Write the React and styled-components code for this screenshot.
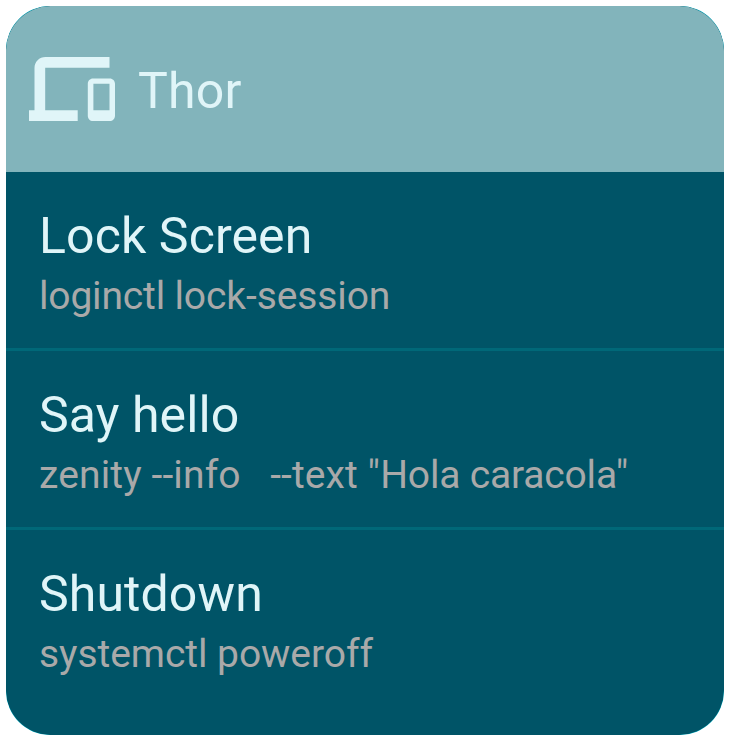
import React from "react";
import styled, { createGlobalStyle } from "styled-components";

const Global = createGlobalStyle`
  body { margin: 0; background: #fff; font-family: Roboto, sans-serif; }
`;

const Page = styled.main`
  box-sizing: border-box;
  height: 742px;
  padding: 6px 7px 7px 6px;
`;

const Card = styled.section`
  height: 729px;
  border-radius: 44px;
  overflow: hidden;
  background: #00acc1;
`;

const Surface = styled.div`
  height: 100%;
  border-radius: 45px;
  overflow: hidden;
  background: #005467;
`;

const Header = styled.header`
  display: flex;
  align-items: center;
  height: 166px;
  box-sizing: border-box;
  padding-left: 23px;
  gap: 23px;
  background: #82b4bb;
  color: #e0f5f8;
`;

const DevicesIcon = styled.svg`
  display: block;
  width: 86px;
  height: 64px;
  fill: currentColor;
`;

const Title = styled.h1`
  margin: 0;
  padding-top: 4px;
  font-size: 50px;
  line-height: 58px;
  font-weight: 400;
  letter-spacing: 0.2px;
`;

const List = styled.ul`
  margin: 0;
  padding: 0;
  list-style: none;
`;

const Command = styled.li`
  box-sizing: border-box;
  height: 179px;
  padding: 35px 33px 0;
  &:not(:last-child) { border-bottom: 3px solid #006878; }
`;

const Name = styled.div`
  font-size: 50px;
  line-height: 58px;
  letter-spacing: 0.1px;
  color: #e0f5f8;
`;

const Script = styled.div`
  margin-top: 8px;
  font-size: 39px;
  line-height: 46px;
  white-space: pre;
  color: #a9a9a9;
`;

const Part = styled.span`
  letter-spacing: ${({ $tracking }) => $tracking}px;
`;

const commands = [
  { name: "Lock Screen", script: [["loginctl ", -0.17], ["lock-session", -0.1]] },
  { name: "Say hello", script: [["zenity --info   ", 0.13], ['--text "', 0.1], ['Hola caracola"', -0.18]] },
  { name: "Shutdown", script: [["systemctl poweroff", -0.06]] },
];

export default function App() {
  return (
    <Page>
      <Global />
      <Card>
        <Surface>
          <Header>
            <DevicesIcon viewBox="0 0 86 64" aria-hidden="true">
              <path d="M80.5 0H16.5C10.3 0 5.5 4.8 5.5 11V53.3H0V64H48.7V53.3H16.2V10.7H80.5Z" />
              <path
                fillRule="evenodd"
                d="M64 21.4H80.7C83.7 21.4 86 23.7 86 26.7V58.7C86 61.7 83.7 64 80.7 64H64C61 64 58.8 61.7 58.8 58.7V26.7C58.8 23.7 61 21.4 64 21.4ZM64.4 26.7V53.3H80.5V26.7Z"
              />
            </DevicesIcon>
            <Title>Thor</Title>
          </Header>
          <List>
            {commands.map(({ name, script }) => (
              <Command key={name}>
                <Name>{name}</Name>
                <Script>
                  {script.map(([text, tracking]) => (
                    <Part key={text} $tracking={tracking}>{text}</Part>
                  ))}
                </Script>
              </Command>
            ))}
          </List>
        </Surface>
      </Card>
    </Page>
  );
}
